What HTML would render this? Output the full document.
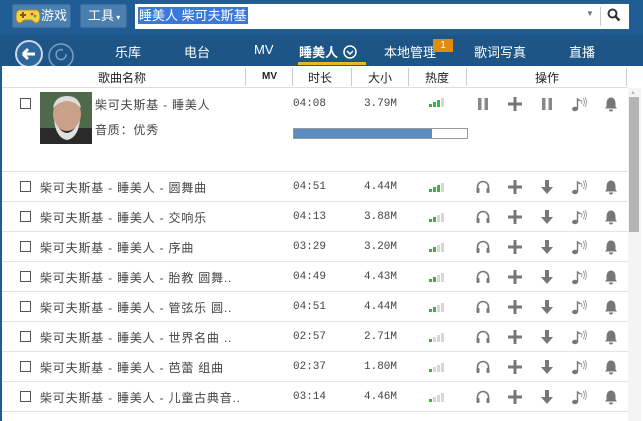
<!DOCTYPE html>
<html><head><meta charset="utf-8">
<style>
*{margin:0;padding:0;box-sizing:border-box}
body{width:643px;height:421px;overflow:hidden;background:#fff;font-family:"Liberation Sans","Noto Sans CJK SC",sans-serif;font-size:12px;color:#333;position:relative}
.a{position:absolute}
.top{left:0;top:0;width:643px;height:35px;background:#1f5c94}
.nav{left:0;top:35px;width:643px;height:31px;background:#1c5586}
.btn{background:#4a7fb0;border:1px solid #3a6c9c;border-radius:2px;color:#fff;font-size:13px;line-height:22px;height:24px;top:4px}
.nt{color:#fff;font-size:13px;top:42px}
.hdr{top:66px;left:2px;width:626px;height:22px;border-bottom:1px solid #ddd;background:#fff}
.hc{top:69px;font-size:12px;color:#222}
.sep{top:68px;width:1px;height:18px;background:#ccc}
.cb{width:11px;height:11px;border:1px solid #555;background:#fff}
.t{font-size:12px;color:#444;letter-spacing:0.8px}
.m{font-family:"Liberation Mono",monospace;font-size:11px;color:#444}
</style></head><body>
<div class="a" style="left:0;top:0;width:2px;height:421px;background:#1f5c94"></div>
<div class="a top"></div>
<div class="a btn" style="left:12px;width:59px;padding-left:28px">游戏</div>
<svg class="a" style="left:16px;top:8px" width="24" height="16" viewBox="0 0 24 16"><path d="M4 2h16c3 0 4 3 4 7s-2 6-4 6c-2 0-3-3-5-3h-6c-2 0-3 3-5 3-2 0-4-2-4-6s1-7 4-7z" fill="#f3d047" stroke="#a88a20"/><rect x="4" y="6" width="6" height="2" fill="#7a5a10"/><rect x="6" y="4" width="2" height="6" fill="#7a5a10"/><circle cx="16" cy="6" r="1.3" fill="#c33"/><circle cx="19" cy="8" r="1.3" fill="#3a3"/></svg>
<div class="a btn" style="left:80px;width:47px;padding-left:7px">工具<span style="font-size:8px"> ▾</span></div>
<div class="a" style="left:134px;top:3px;width:496px;height:27px;background:#fff;border:1px solid #2b5e8e"></div>
<div class="a" style="left:138px;top:7px;height:17px;background:#3b79d8;color:#fff;font-size:13px;line-height:17px;padding:0 1px">睡美人 柴可夫斯基</div>
<div class="a" style="left:586px;top:9px;color:#777;font-size:8px">▼</div>
<div class="a" style="left:600px;top:7px;width:1px;height:19px;background:#ccc"></div>
<svg class="a" style="left:607px;top:8px" width="14" height="14" viewBox="0 0 14 14"><circle cx="5.5" cy="5.5" r="4" fill="none" stroke="#333" stroke-width="2"/><path d="M8.5 8.5l4 4" stroke="#333" stroke-width="2.5"/></svg>
<div class="a nav"></div>
<svg class="a" style="left:12px;top:39px" width="64" height="30" viewBox="0 0 64 30"><circle cx="17" cy="15" r="13" fill="#2d679b" stroke="#c8d8e8" stroke-width="2"/><path d="M11 15h12M11 15l5-5M11 15l5 5" stroke="#fff" stroke-width="3" fill="none"/><circle cx="49" cy="17" r="12" fill="none" stroke="#7d9fbf" stroke-width="1.5"/><path d="M54 15a5 5 0 1 1-3-4" stroke="#7d9fbf" stroke-width="1.5" fill="none"/></svg>
<div class="a nt" style="left:115px">乐库</div>
<div class="a nt" style="left:184px">电台</div>
<div class="a nt" style="left:254px">MV</div>
<div class="a nt" style="left:299px;font-weight:bold">睡美人</div>
<svg class="a" style="left:343px;top:45px" width="14" height="14"><circle cx="7" cy="7" r="6" fill="none" stroke="#fff" stroke-width="1.5"/><path d="M4 6l3 3 3-3" stroke="#fff" stroke-width="1.5" fill="none"/></svg>
<div class="a" style="left:298px;top:62px;width:68px;height:3px;background:#e7b823"></div>
<div class="a nt" style="left:384px">本地管理</div>
<div class="a" style="left:433px;top:39px;width:20px;height:13px;background:#e08c10;color:#fff;font-size:10px;text-align:center;line-height:13px">1</div>
<div class="a nt" style="left:474px">歌词写真</div>
<div class="a nt" style="left:569px">直播</div>
<div class="a hdr"></div>
<div class="a hc" style="left:98px">歌曲名称</div>
<div class="a hc" style="left:262px;font-size:10px;font-weight:bold;top:71px">MV</div>
<div class="a hc" style="left:308px">时长</div>
<div class="a hc" style="left:368px">大小</div>
<div class="a hc" style="left:425px">热度</div>
<div class="a hc" style="left:535px">操作</div>
<div class="a sep" style="left:245px"></div><div class="a sep" style="left:292px"></div><div class="a sep" style="left:351px"></div><div class="a sep" style="left:408px"></div><div class="a sep" style="left:466px"></div><div class="a sep" style="left:626px"></div>
<div class="a" style="left:628px;top:88px;width:13px;height:333px;background:#f4f4f4"></div>
<div class="a" style="left:630px;top:90px;color:#bbb;font-size:6px">▲</div>
<div class="a" style="left:629px;top:97px;width:10px;height:135px;background:#b4b4b4"></div>
<div id="rows"></div>
<script>
function icon(k,x,y){var s='<svg class="a" style="left:'+x+'px;top:'+y+'px" width="16" height="16" viewBox="0 0 16 16">';
if(k=='pause')s+='<rect x="3" y="2" width="3.5" height="12" fill="#888"/><rect x="9.5" y="2" width="3.5" height="12" fill="#888"/>';
if(k=='plus')s+='<path d="M8 1v14M1 8h14" stroke="#777" stroke-width="3"/>';
if(k=='head')s+='<path d="M2.5 12V8a5.5 5.5 0 0 1 11 0v4" stroke="#777" stroke-width="1.6" fill="none"/><rect x="1.5" y="9" width="3" height="5" rx="1" fill="#777"/><rect x="11.5" y="9" width="3" height="5" rx="1" fill="#777"/>';
if(k=='down')s+='<path d="M6 1h4v7h4l-6 7-6-7h4z" fill="#777"/>';
if(k=='note')s+='<ellipse cx="4" cy="13" rx="3" ry="2.2" fill="#777"/><path d="M6.5 13V3l3 2" stroke="#777" stroke-width="1.4" fill="none"/><path d="M10 4q2 2 0 4M12 2q3 4 0 8M14 1q3 5 0 10" stroke="#999" stroke-width=".9" fill="none"/>';
if(k=='bell')s+='<path d="M8 1.5c-3 0-4.5 3-4.5 6v3L2 12.5h12l-1.5-2v-3c0-3-1.5-6-4.5-6z" fill="#777"/><path d="M6 13.5a2 2 0 0 0 4 0" fill="#777"/>';
return s+'</svg>';}
function heat(x,y,n){var s='';for(var i=0;i<4;i++){var h=3+i*2;s+='<div class="a" style="left:'+(x+i*4)+'px;top:'+(y+10-h)+'px;width:3px;height:'+h+'px;background:'+(i<n?'#3db33d':'#d6d6d6')+'"></div>';}return s;}
var h='';
h+='<div class="a" style="left:2px;top:171px;width:626px;height:1px;background:#e4e4e4"></div>';
h+='<div class="a cb" style="left:20px;top:98px"></div>';
h+='<svg class="a" style="left:40px;top:92px" width="52" height="52" viewBox="0 0 52 52"><rect width="52" height="52" fill="#4e6a4a"/><rect x="0" y="36" width="52" height="16" fill="#2a2a2a"/><ellipse cx="27" cy="22" rx="14" ry="17" fill="#c9a088"/><path d="M13 16q14-14 28 0q-2-12-14-12t-14 12z" fill="#ddd"/><path d="M14 28q13 26 26 0q-2 18-13 20q-11-2-13-20z" fill="#e0e0e0"/></svg>';
h+='<div class="a t" style="left:95px;top:96px">柴可夫斯基 - 睡美人</div>';
h+='<div class="a t" style="left:95px;top:121px">音质：优秀</div>';
h+='<div class="a m" style="left:293px;top:98px">04:08</div><div class="a m" style="left:364px;top:98px">3.79M</div>';
h+=heat(429,97,3);
h+=icon('pause',475,96)+icon('plus',507,96)+icon('pause',539,96)+icon('note',571,96)+icon('bell',603,96);
h+='<div class="a" style="left:293px;top:128px;width:175px;height:11px;border:1px solid #999;background:#fff"></div><div class="a" style="left:294px;top:129px;width:138px;height:9px;background:#5b8cc0"></div>';
var R=[['圆舞曲','04:51','4.44M',3],['交响乐','04:13','3.88M',2],['序曲','03:29','3.20M',2],['胎教 圆舞..','04:49','4.43M',2],['管弦乐 圆..','04:51','4.44M',2],['世界名曲 ..','02:57','2.71M',1],['芭蕾 组曲','02:37','1.80M',1],['儿童古典音..','03:14','4.46M',1]];
for(var i=0;i<R.length;i++){var y=172+i*30,c=y+15;
h+='<div class="a" style="left:2px;top:'+(y+29)+'px;width:626px;height:1px;background:#e4e4e4"></div>';
h+='<div class="a cb" style="left:20px;top:'+(c-6)+'px"></div>';
h+='<div class="a t" style="left:40px;top:'+(c-8)+'px">柴可夫斯基 - 睡美人 - '+R[i][0]+'</div>';
h+='<div class="a m" style="left:293px;top:'+(c-6)+'px">'+R[i][1]+'</div><div class="a m" style="left:364px;top:'+(c-6)+'px">'+R[i][2]+'</div>';
h+=heat(429,c-5,R[i][3]);
h+=icon('head',475,c-8)+icon('plus',507,c-8)+icon('down',539,c-8)+icon('note',571,c-8)+icon('bell',603,c-8);}
document.getElementById('rows').innerHTML=h;
</script>
</body></html>
